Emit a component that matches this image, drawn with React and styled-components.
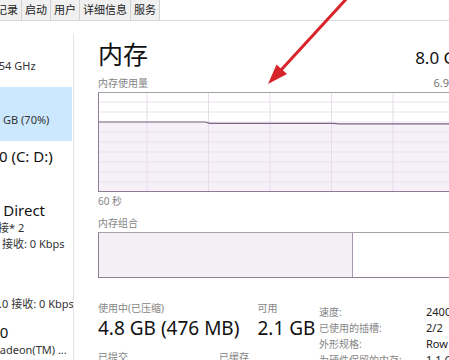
import React from 'react'
import styled, { createGlobalStyle } from 'styled-components'

const GlobalStyle = createGlobalStyle`
  html, body { margin: 0; padding: 0; background: #fff; }
  body {
    font-family: "Noto Sans", "Noto Sans CJK SC", sans-serif;
    color: #1b1b1b;
  }
`;

const Window = styled.div`
  position: relative;
  width: 449px;
  height: 360px;
  overflow: hidden;
  background: #fff;
`;

const TabBar = styled.div`
  display: flex;
  height: 21px;
  border-bottom: 1px solid #dadada;
  box-sizing: border-box;
`;

const Tabs = styled.div`
  display: flex;
  margin-left: -51px;
`;

const Tab = styled.div`
  padding: 0 3px;
  font-size: 11px;
  line-height: 20px;
  background: #f0f0f0;
  border-right: 1px solid #d2d2d2;
  color: #222;
  white-space: nowrap;
`;

const Body = styled.div`
  display: flex;
  height: 339px;
`;

const Sidebar = styled.div`
  flex: none;
  width: 74px;
  box-sizing: border-box;
  margin-top: 12px;
  border-right: 1px solid #e4e4e4;
  overflow: hidden;
`;

const SideItem = styled.div`
  min-height: ${p => p.$min || 54}px;
  box-sizing: border-box;
  padding: 5px 0 3px;
  margin-right: 1px;
  background: ${p => (p.$active ? '#cce8ff' : 'transparent')};
`;

const SideText = styled.div`
  margin-left: -35px;
  white-space: nowrap;
`;

const ItemTitle = styled.div`
  font-size: 15px;
  line-height: 20px;
  color: #111;
`;

const ItemSub = styled.div`
  font-size: 11px;
  line-height: 16px;
  color: #333;
`;

const Main = styled.div`
  flex: none;
  width: 369px;
  padding: 16px 0 0 24px;
`;

const Header = styled.div`
  display: flex;
  justify-content: space-between;
  align-items: baseline;
`;

const Title = styled.div`
  font-size: 25px;
  line-height: 34px;
  color: #111;
`;

const Total = styled.div`
  font-size: 17px;
  color: #111;
`;

const LabelRow = styled.div`
  display: flex;
  justify-content: space-between;
  align-items: baseline;
  margin-top: ${p => p.$top || 0}px;
`;

const Label = styled.div`
  font-size: 10px;
  line-height: 14px;
  color: #858585;
`;

const SmallValue = styled.div`
  font-size: 11px;
  line-height: 14px;
  color: #777;
`;

const GraphBox = styled.div`
  margin-top: 2px;
  height: 100px;
  box-sizing: border-box;
  border: 1px solid #8f7b96;
  border-top-color: #a7a0aa;
  background: #fff;

  svg { display: block; }
`;

const CompBox = styled.div`
  display: flex;
  margin-top: 2px;
  height: 46px;
  box-sizing: border-box;
  border: 1px solid #8f7b96;
  border-top-color: #a7a0aa;
`;

const CompSegment = styled.div`
  flex: none;
  background: #f3eff4;
  border-right: 1px solid #a898ad;
`;

const Stats = styled.div`
  display: flex;
  align-items: flex-start;
  margin-top: 23px;
`;

const StatGroups = styled.div`
  flex: none;
  width: 221px;
`;

const StatRow = styled.div`
  display: flex;
  gap: ${p => p.$gap}px;
  margin-bottom: 9px;
`;

const Stat = styled.div`
  white-space: nowrap;
`;

const StatValue = styled.div`
  font-size: 19px;
  line-height: 26px;
  color: #111;
`;

const Specs = styled.div`
  display: grid;
  grid-template-columns: 107px auto;
  grid-auto-rows: 16px;
  margin-top: 3px;
  white-space: nowrap;
`;

const SpecLabel = styled.div`
  font-size: 10px;
  line-height: 16px;
  color: #858585;
`;

const SpecValue = styled.div`
  font-size: 11px;
  line-height: 16px;
  color: #222;
`;

const ArrowLayer = styled.svg`
  position: absolute;
  left: 0;
  top: 0;
  pointer-events: none;
`;

const gridXs = [48, 109.5, 171, 232.5, 294, 355.5];
const gridYs = [9, 19, 29, 39, 49, 59, 69, 79, 89];

const UsageChart = () => {
  const line = '0,29 106,29 111,30.3 235,30.3 240,30.8 367,30.8';
  return (
    <svg width="367" height="98" viewBox="0 0 367 98">
      <polygon points={`${line} 367,98 0,98`} fill="#f6f0f8" />
      {gridYs.map(y => (
        <line key={y} x1="0" x2="367" y1={y} y2={y} stroke="#e9e1ec" strokeWidth="1" />
      ))}
      {gridXs.map(x => (
        <line key={x} x1={x} x2={x} y1="0" y2="98" stroke="#e6dde9" strokeWidth="1" />
      ))}
      <polyline points={line} fill="none" stroke="#7d6386" strokeWidth="1.2" />
    </svg>
  );
};

const sideItems = [
  { title: 'CPU', subs: ['17% 2.54 GHz'] },
  { title: '内存', subs: ['4.8/6.9 GB (70%)'], active: true },
  { title: '磁盘 0 (C: D:)', subs: ['1%'] },
  { title: 'Wi-Fi Direct', subs: ['本地连接* 2', '发送: 0 接收: 0 Kbps'] },
  { title: 'Wi-Fi', subs: ['WLAN', '发送: 8.0 接收: 0 Kbps'], min: 62 },
  { title: 'GPU 0', subs: ['AMD Radeon(TM) ...'] },
];

const specs = [
  ['速度:', '2400 MHz'],
  ['已使用的插槽:', '2/2'],
  ['外形规格:', 'Row of chips'],
  ['为硬件保留的内存:', '1.1 GB'],
];

const App = () => {
  return (
    <Window>
      <GlobalStyle />
      <TabBar>
        <Tabs>
          <Tab>应用历史记录</Tab>
          <Tab>启动</Tab>
          <Tab>用户</Tab>
          <Tab>详细信息</Tab>
          <Tab>服务</Tab>
        </Tabs>
      </TabBar>
      <Body>
        <Sidebar>
          {sideItems.map(item => (
            <SideItem key={item.title} $active={item.active} $min={item.min}>
              <SideText>
                <ItemTitle>{item.title}</ItemTitle>
                {item.subs.map(s => (
                  <ItemSub key={s}>{s}</ItemSub>
                ))}
              </SideText>
            </SideItem>
          ))}
        </Sidebar>
        <Main>
          <Header>
            <Title>内存</Title>
            <Total>8.0 GB</Total>
          </Header>
          <LabelRow $top={5}>
            <Label>内存使用量</Label>
            <SmallValue>6.9 GB</SmallValue>
          </LabelRow>
          <GraphBox>
            <UsageChart />
          </GraphBox>
          <LabelRow $top={2}>
            <Label>60 秒</Label>
          </LabelRow>
          <LabelRow $top={8}>
            <Label>内存组合</Label>
          </LabelRow>
          <CompBox>
            <CompSegment style={{ width: '253px' }} />
          </CompBox>
          <Stats>
            <StatGroups>
              <StatRow $gap={18}>
                <Stat>
                  <Label>使用中(已压缩)</Label>
                  <StatValue>4.8 GB (476 MB)</StatValue>
                </Stat>
                <Stat>
                  <Label>可用</Label>
                  <StatValue>2.1 GB</StatValue>
                </Stat>
              </StatRow>
              <StatRow $gap={18}>
                <Stat style={{ width: '103px' }}>
                  <Label>已提交</Label>
                  <StatValue>5.1/8.5 GB</StatValue>
                </Stat>
                <Stat>
                  <Label>已缓存</Label>
                  <StatValue>1.9 GB</StatValue>
                </Stat>
              </StatRow>
            </StatGroups>
            <Specs>
              {specs.map(([k, v]) => (
                <React.Fragment key={k}>
                  <SpecLabel>{k}</SpecLabel>
                  <SpecValue>{v}</SpecValue>
                </React.Fragment>
              ))}
            </Specs>
          </Stats>
        </Main>
      </Body>
      <ArrowLayer width="449" height="360" viewBox="0 0 449 360">
        <line x1="349" y1="-4" x2="282" y2="69" stroke="#d8232a" strokeWidth="3" strokeLinecap="round" />
        <polygon points="268,84 287,74 276.5,64.5" fill="#d8232a" />
      </ArrowLayer>
    </Window>
  );
};

export default App
